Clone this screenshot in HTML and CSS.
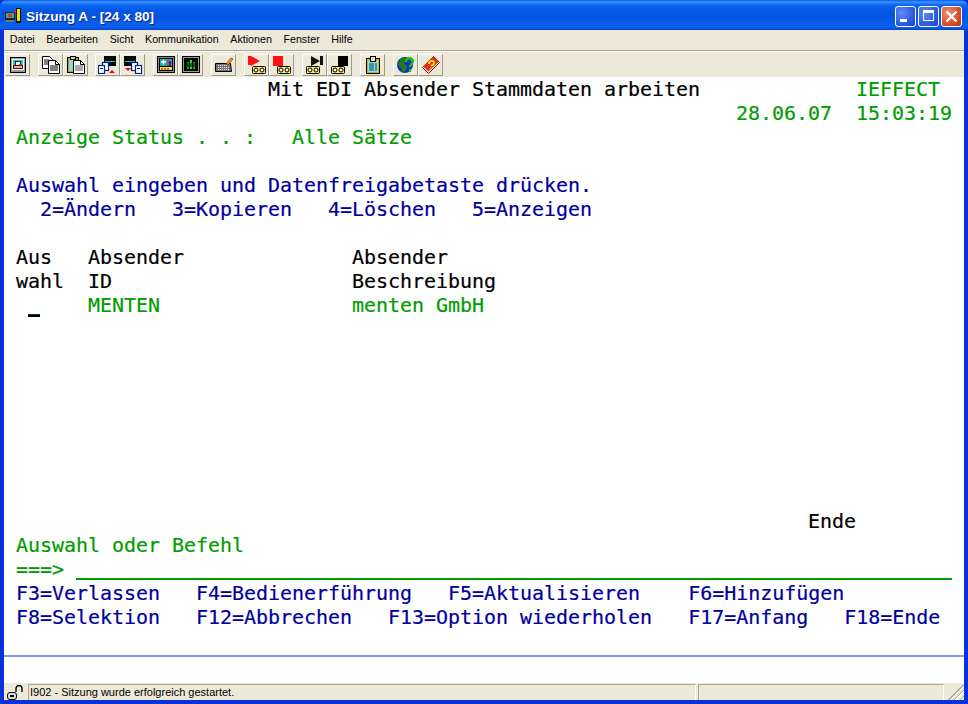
FILE: index.html
```html
<!DOCTYPE html>
<html lang="de">
<head>
<meta charset="utf-8">
<title>Sitzung A - [24 x 80]</title>
<link rel="stylesheet" href="styles.css">
</head>
<body>
<div class="window">
  <header class="titlebar">
    <svg class="appicon" width="16" height="16" viewBox="0 0 16 16"><rect x="0" y="4" width="10" height="8" fill="#222"/><rect x="1" y="5" width="8" height="5" fill="#3a9"/><rect x="3" y="6" width="4" height="3" fill="#d33"/><rect x="1" y="12" width="8" height="2" fill="#777"/><rect x="11" y="0" width="5" height="15" fill="#111"/><rect x="12" y="1" width="3" height="12" fill="#fd0"/><path d="M8 4l3-2v3z" fill="#e22"/></svg>
    <span class="title">Sitzung A - [24 x 80]</span>
    <div class="caption">
      <span class="capbtn"><i class="g-min"></i></span>
      <span class="capbtn"><i class="g-max"></i></span>
      <span class="capbtn close"><svg width="21" height="21" viewBox="0 0 21 21"><path d="M5.500 5.500l10 10M15.500 5.500l-10 10" stroke="#fff" stroke-width="2.400"/></svg></span>
    </div>
  </header>
  <div class="inner">
    <nav class="menubar">
      <span>Datei</span><span>Bearbeiten</span><span>Sicht</span><span>Kommunikation</span><span>Aktionen</span><span>Fenster</span><span>Hilfe</span>
    </nav>
    <div class="toolbar">
      <div class="group">
        <button class="tb"><svg width="18" height="18" viewBox="0 0 18 18"><rect x="1.500" y="1.500" width="15" height="15" fill="#9a9a9a" stroke="#000"/><rect x="3" y="3" width="12" height="11" fill="#fff"/><rect x="4" y="4" width="10" height="9" fill="#16c8c8"/><rect x="6.500" y="5.500" width="5" height="4" fill="#fff" stroke="#000" stroke-width=".8"/><rect x="4.500" y="9.500" width="9" height="3" fill="#f6b0a0" stroke="#000" stroke-width=".8"/><rect x="10" y="8" width="3" height="1.500" fill="#e22"/></svg></button>
      </div>
      <div class="group">
        <button class="tb"><svg width="18" height="18" viewBox="0 0 18 18"><path d="M0.500 0.500h7l3 3v9h-10z" fill="#fff" stroke="#000"/><path d="M2 4h5M2 6h5M2 8h5" stroke="#000"/><path d="M6.500 4.500h7l4 4v9h-11z" fill="#fff" stroke="#000"/><path d="M13.500 4.500v4h4" fill="none" stroke="#000"/><path d="M8 10h8M8 12h8M8 14h8" stroke="#000"/></svg></button>
        <button class="tb"><svg width="18" height="18" viewBox="0 0 18 18"><rect x="0.500" y="1.500" width="11" height="15" fill="#c8a020" stroke="#000"/><rect x="2" y="4" width="8" height="11" fill="#8fd8d8"/><rect x="3.500" y="0.500" width="5" height="3" fill="#ccc" stroke="#000"/><path d="M6.500 4.500h7l4 4v9h-11z" fill="#fff" stroke="#000"/><path d="M13.500 4.500v4h4" fill="none" stroke="#000"/><path d="M8 10h8M8 12h8M8 14h8" stroke="#555"/></svg></button>
      </div>
      <div class="group g3">
        <button class="tb"><svg width="20" height="18" viewBox="0 0 20 18"><rect x="6" y="0" width="12" height="10" fill="#000"/><rect x="7" y="5" width="10" height="1" fill="#1cc"/><rect x="4.500" y="6.500" width="6" height="8" fill="#fff" stroke="#00208f" stroke-width="1.200"/><rect x="0.500" y="9.500" width="6" height="8" fill="#fff" stroke="#00208f" stroke-width="1.200"/><rect x="2" y="12" width="3" height="1" fill="#00208f"/><path d="M11 17l3-3 3 3z" fill="#e00"/></svg></button>
        <button class="tb"><svg width="20" height="18" viewBox="0 0 20 18"><rect x="1" y="0" width="12" height="10" fill="#000"/><rect x="2" y="5" width="10" height="1" fill="#1cc"/><rect x="8.500" y="6.500" width="6" height="8" fill="#fff" stroke="#00208f" stroke-width="1.200"/><rect x="12.500" y="9.500" width="6" height="8" fill="#fff" stroke="#00208f" stroke-width="1.200"/><rect x="14" y="12" width="3" height="1" fill="#00208f"/><path d="M2 12l3 3 3-3z" fill="#e00"/></svg></button>
      </div>
      <div class="group">
        <button class="tb"><svg width="18" height="18" viewBox="0 0 18 18"><rect x="0.500" y="0.500" width="17" height="16" fill="#8a8a8a" stroke="#000"/><rect x="2" y="2" width="14" height="13" fill="#000"/><rect x="3" y="3" width="12" height="7" fill="#12b0b0"/><path d="M4 6h5M6.500 3.500v5" stroke="#fff" stroke-width="1.300"/><rect x="10" y="4" width="2" height="6" fill="#e33"/><rect x="12" y="5" width="2" height="5" fill="#22c"/><rect x="3" y="11" width="12" height="3" fill="#fd3"/><path d="M5 12v2M8 12v2M11 12v2" stroke="#000" stroke-width=".8"/></svg></button>
        <button class="tb"><svg width="18" height="18" viewBox="0 0 18 18"><rect x="0.500" y="0.500" width="17" height="16" fill="#9a9a9a" stroke="#000"/><rect x="2" y="2" width="14" height="13" fill="#000"/><rect x="5" y="6" width="2" height="7" fill="#0b0"/><rect x="8" y="4" width="2" height="9" fill="#2d2"/><rect x="11" y="6" width="2" height="7" fill="#0b0"/><path d="M4 8h10M4 10h10" stroke="#000"/></svg></button>
      </div>
      <div class="group">
        <button class="tb"><svg width="18" height="18" viewBox="0 0 18 18"><path d="M0.500 7.500h15l1 8H0.500z" fill="#777" stroke="#000"/><path d="M3 9.500h10M3 11.500h11M3 13.500h11" stroke="#e0e0e0" stroke-dasharray="1 1"/><path d="M11 8l5-6 2 1-5 6z" fill="#f5a020" stroke="#800" stroke-width=".6"/></svg></button>
      </div>
      <div class="group">
        <button class="tb"><svg width="18" height="18" viewBox="0 0 18 18"><rect x="0" y="0" width="3" height="9" fill="#f11"/><path d="M3 0l9 5-9 5z" fill="#f11"/><rect x="4.500" y="10.500" width="13" height="7" rx="1" fill="#fe5" stroke="#000"/><circle cx="8" cy="14" r="2" fill="#fff" stroke="#000"/><circle cx="14" cy="14" r="2" fill="#fff" stroke="#000"/></svg></button>
        <button class="tb"><svg width="18" height="18" viewBox="0 0 18 18"><rect x="0" y="0" width="10" height="10" fill="#f11"/><rect x="4.500" y="10.500" width="13" height="7" rx="1" fill="#fe5" stroke="#000"/><circle cx="8" cy="14" r="2" fill="#fff" stroke="#000"/><circle cx="14" cy="14" r="2" fill="#fff" stroke="#000"/></svg></button>
      </div>
      <div class="group">
        <button class="tb"><svg width="18" height="18" viewBox="0 0 18 18"><path d="M5 0l9 5-9 5z" fill="#111"/><rect x="14" y="0" width="3" height="9" fill="#111"/><rect x="0.500" y="10.500" width="13" height="7" rx="1" fill="#fe5" stroke="#000"/><circle cx="4" cy="14" r="2" fill="#fff" stroke="#000"/><circle cx="10" cy="14" r="2" fill="#fff" stroke="#000"/></svg></button>
        <button class="tb"><svg width="18" height="18" viewBox="0 0 18 18"><rect x="7" y="0" width="10" height="10" fill="#000"/><rect x="0.500" y="10.500" width="13" height="7" rx="1" fill="#fe5" stroke="#000"/><circle cx="4" cy="14" r="2" fill="#fff" stroke="#000"/><circle cx="10" cy="14" r="2" fill="#fff" stroke="#000"/></svg></button>
      </div>
      <div class="group">
        <button class="tb"><svg width="18" height="18" viewBox="0 0 18 18"><rect x="2.500" y="2.500" width="13" height="15" fill="#d8b000" stroke="#000"/><rect x="4" y="5" width="10" height="11" fill="#90e0e0"/><rect x="6.500" y="0.500" width="5" height="5" fill="#ddd" stroke="#000"/><path d="M5 8h8M5 10h8M5 12h8M5 14h8" stroke="#046" stroke-dasharray="5 1"/></svg></button>
      </div>
      <div class="group">
        <button class="tb"><svg width="18" height="18" viewBox="0 0 18 18"><circle cx="8" cy="9" r="8" fill="#1530c0"/><path d="M3 3l5-2 2 3-3 3 3 3-1 4-3 3-2-5-3-3z" fill="#1f7a20"/><path d="M9 6c0-5 7-5 7-1 0 3-3 3-3 6M13 13v3" fill="none" stroke="#06d006" stroke-width="2.200"/></svg></button>
        <button class="tb"><svg width="18" height="18" viewBox="0 0 18 18"><path d="M0.500 11.500L11.500 0.500l6 6L6.500 17.500z" fill="#fff" stroke="#700"/><path d="M1 10.500L11 0.500l6 5L6.500 15.500z" fill="#e03020"/><path d="M7 8c0-4 5-4 5-1 0 2-2 2-3 3M8 12l.5.500" fill="none" stroke="#fd0" stroke-width="2"/></svg></button>
      </div>
    </div>
    <main class="screen">
      <pre class="row">                      <span class="black">Mit EDI Absender Stammdaten arbeiten</span>             <span class="green">IEFFECT</span></pre>
      <pre class="row">                                                             <span class="green">28.06.07</span>  <span class="green">15:03:19</span></pre>
      <pre class="row"> <span class="green">Anzeige Status . . :</span>   <span class="green">Alle Sätze</span></pre>
      <pre class="row"> </pre>
      <pre class="row"> <span class="blue">Auswahl eingeben und Datenfreigabetaste drücken.</span></pre>
      <pre class="row">   <span class="blue">2=Ändern</span>   <span class="blue">3=Kopieren</span>   <span class="blue">4=Löschen</span>   <span class="blue">5=Anzeigen</span></pre>
      <pre class="row"> </pre>
      <pre class="row"> <span class="black">Aus</span>   <span class="black">Absender</span>              <span class="black">Absender</span></pre>
      <pre class="row"> <span class="black">wahl</span>  <span class="black">ID</span>                    <span class="black">Beschreibung</span></pre>
      <pre class="row">  <span class="cursor"> </span>    <span class="green">MENTEN</span>                <span class="green">menten GmbH</span></pre>
      <pre class="row"> </pre><pre class="row"> </pre><pre class="row"> </pre><pre class="row"> </pre><pre class="row"> </pre><pre class="row"> </pre><pre class="row"> </pre><pre class="row"> </pre>
      <pre class="row">                                                                   <span class="black">Ende</span></pre>
      <pre class="row"> <span class="green">Auswahl oder Befehl</span></pre>
      <pre class="row"> <span class="green">===&gt;</span> <span class="input">                                                                         </span></pre>
      <pre class="row"> <span class="blue">F3=Verlassen</span>   <span class="blue">F4=Bedienerführung</span>   <span class="blue">F5=Aktualisieren</span>    <span class="blue">F6=Hinzufügen</span></pre>
      <pre class="row"> <span class="blue">F8=Selektion</span>   <span class="blue">F12=Abbrechen</span>   <span class="blue">F13=Option wiederholen</span>   <span class="blue">F17=Anfang</span>   <span class="blue">F18=Ende</span></pre>
      <pre class="row"> </pre>
      <div class="oia"></div>
    </main>
    <footer class="statusbar">
      <span class="lock"><svg width="20" height="15" viewBox="0 0 20 15"><path d="M10 7V3.500a3 3 0 0 1 6 0V7" fill="none" stroke="#000" stroke-width="1.400"/><rect x="1.500" y="7.500" width="9" height="7" rx="2.500" fill="#ddd" stroke="#000"/><rect x="4" y="10" width="4" height="2" fill="#000"/></svg></span>
      <span class="message">I902 - Sitzung wurde erfolgreich gestartet.</span>
      <span class="pane"></span>
      <span class="grip"></span>
    </footer>
  </div>
</div>
</body>
</html>
```

FILE: styles.css
```css
* { box-sizing: border-box; }
html, body { margin: 0; padding: 0; width: 968px; height: 704px; overflow: hidden; background: #0a3fd0; }

.window { width: 968px; height: 704px; display: flex; flex-direction: column; background: #0831d9; padding: 0 4px 4px; }

.titlebar {
  height: 30px; margin: 0 -4px; padding: 2px 5px 0 5px; display: flex; align-items: center; flex: none;
  border-radius: 7px 7px 0 0;
  background: linear-gradient(to bottom, #0a5be0 0, #3a93ff 2px, #0a66f0 5px, #0558e6 10px, #0553e0 18px, #0a62ee 25px, #0a5ae8 28px, #0340c8 30px);
}
.appicon { flex: none; }
.title { margin-left: 5px; color: #fff; font: bold 13.600px "Liberation Sans", sans-serif; text-shadow: 1px 1px 0 #0a2a90; flex: 1; }
.caption { display: flex; gap: 2px; margin-right: 1px; }
.capbtn {
  width: 21px; height: 21px; border: 1px solid #fff; border-radius: 3px; position: relative; display: block;
  background: radial-gradient(circle at 30% 30%, #5f8cf5 0, #2f5ce0 60%, #1c3fc4 100%);
}
.capbtn.close { background: radial-gradient(circle at 30% 30%, #ee9070 0, #d8502a 60%, #b53010 100%); }
.capbtn.close svg { position: absolute; left: -1px; top: -1px; }
.g-min { position: absolute; left: 4px; top: 12px; width: 7px; height: 3px; background: #fff; }
.g-max { position: absolute; left: 4px; top: 3px; width: 11px; height: 11px; border: 1px solid #fff; border-top-width: 3px; }

.inner { flex: 1; display: flex; flex-direction: column; background: #ece9d8; min-height: 0; }

.menubar { height: 21px; flex: none; display: flex; align-items: center; padding: 0 0 2px 0; font: 10.700px "Liberation Sans", sans-serif; color: #000; border-bottom: 1px solid #aca899; box-shadow: 0 1px 0 #fff; }
.menubar span { padding: 0 5.800px; }

.toolbar { height: 26px; flex: none; display: flex; align-items: flex-start; gap: 8px; padding: 3px 0 0 1px; }
.group { display: flex; }
.g3 { margin-left: -1px; }
.tb {
  width: 25px; height: 22px; padding: 0; margin: 0; display: flex; align-items: center; justify-content: center;
  background: #ece9d8; border: 1px solid; border-color: #fff #9d9a8a #9d9a8a #fff;
}

.screen { height: 606px; flex: none; background: #fff; padding: 0; }
.row { margin: 0; height: 24px; font: 20px/24px "DejaVu Sans Mono", "Liberation Mono", monospace; letter-spacing: -0.04px; white-space: pre; color: #000; -webkit-text-stroke: 0.2px; }
.black { color: #000; }
.green { color: #009c00; }
.blue { color: #00009c; }
.cursor { display: inline-block; width: 12px; height: 24px; vertical-align: top; background: linear-gradient(#003c00 0 1px, #000 1px 3px) 0 21px / 12px 3px no-repeat; }
.input { display: inline-block; height: 23px; vertical-align: top; border-bottom: 2px solid #009c00; }
.oia { height: 2px; margin-top: 2px; background: #7d96f5; }

.statusbar { height: 17px; flex: none; display: flex; align-items: stretch; font: 11px "Liberation Sans", sans-serif; color: #000; padding-top: 1px; }
.lock { width: 24px; display: flex; align-items: center; justify-content: center; }
.message { width: 668px; padding: 0 1px; line-height: 14px; border-left: 1px solid #aca899; border-top: 1px solid #aca899; border-right: 1px solid #fff; white-space: nowrap; }
.pane { margin-left: 2px; flex: 1; border-left: 1px solid #aca899; border-top: 1px solid #aca899; border-right: 1px solid #fff; }
.grip { width: 20px; background: repeating-linear-gradient(135deg, transparent 0 2px, #aca899 2px 3px, #fff 3px 4px); clip-path: polygon(100% 0, 100% 100%, 0 100%); }
```
